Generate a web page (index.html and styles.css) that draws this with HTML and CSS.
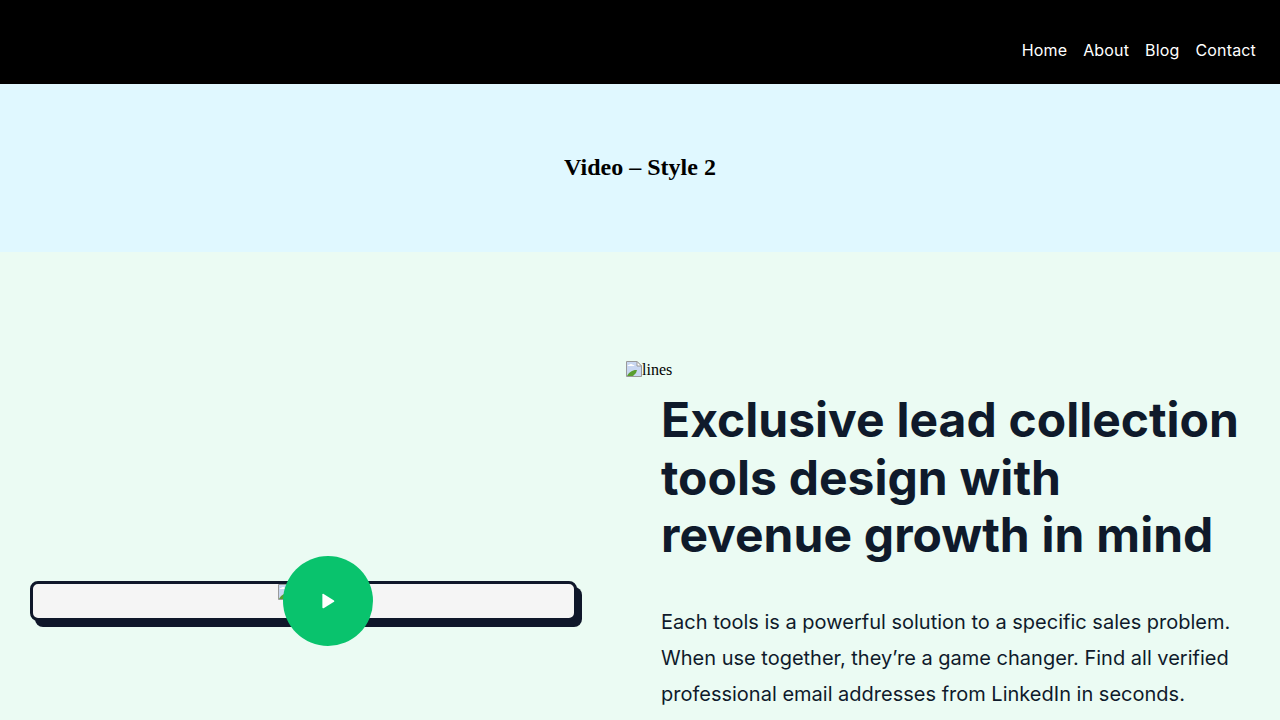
FILE: index.html
```html
<!DOCTYPE html>
<html lang="en">
<head>
    <meta charset="UTF-8">
    <meta name="viewport" content="width=device-width, initial-scale=1.0">
    <title>Video - Style 2</title>
    <link rel="stylesheet" href="styles.css">
</head>
<body>
    <header class="site-header">
        <nav class="main-nav">
            <a href="#">Home</a>
            <a href="#">About</a>
            <a href="#">Blog</a>
            <a href="#">Contact</a>
        </nav>
    </header>

    <section class="page-title">
        <h2>Video – Style 2</h2>
    </section>

    <section class="video-section">
        <div class="video-col">
            <div class="video-frame">
                <div class="frame-alt">
                    <svg class="broken-img" viewBox="0 0 16 16" aria-hidden="true">
                        <path d="M.5.5h10.500l4.500 4.500v10.500h-15z" fill="#c9d7f2" stroke="#9a9a9a"/>
                        <path d="M3 4c1-1.500 3-1.500 4 0 1 0 1.500.5 1.500 1h-7c0-.5.700-1 1.500-1z" fill="#fff"/>
                        <path d="M11 .5v4.500h4.500z" fill="#fff" stroke="#9a9a9a"/>
                        <path d="M1 15c2-4 6-6.500 10-6l-1 3-3 3z" fill="#5a9e2f"/>
                    </svg>video
                </div>
                <button class="play-btn" type="button" aria-label="Play video">
                    <svg viewBox="0 0 16 16" width="20" height="20">
                        <path d="M3.500 2.800v10.400c0 .5.500.8 1 .5l8.300-5.200c.4-.3.400-.7 0-1L4.500 2.300c-.5-.3-1 0-1 .5z" fill="#fff"/>
                    </svg>
                </button>
            </div>
        </div>
        <div class="text-col">
            <div class="lines-img">
                <svg class="broken-img" viewBox="0 0 16 16" aria-hidden="true">
                    <path d="M.5.5h10.500l4.500 4.500v10.500h-15z" fill="#c9d7f2" stroke="#9a9a9a"/>
                    <path d="M3 4c1-1.500 3-1.500 4 0 1 0 1.500.5 1.500 1h-7c0-.5.700-1 1.500-1z" fill="#fff"/>
                    <path d="M11 .5v4.500h4.500z" fill="#fff" stroke="#9a9a9a"/>
                    <path d="M1 15c2-4 6-6.500 10-6l-1 3-3 3z" fill="#5a9e2f"/>
                </svg>lines
            </div>
            <div class="text-body">
                <h1>Exclusive lead collection tools design with revenue growth in mind</h1>
                <p>Each tools is a powerful solution to a specific sales problem. When use together, they’re a game changer. Find all verified professional email addresses from LinkedIn in seconds.</p>
            </div>
        </div>
    </section>
</body>
</html>
```

FILE: styles.css
```css
body {
    margin: 0;
    font-family: "Liberation Serif", serif;
    color: #000;
    background: #ebfbf3;
}
.site-header {
    display: flex;
    justify-content: flex-end;
    align-items: flex-end;
    height: 84px;
    box-sizing: border-box;
    padding: 0 24px 22px;
    background: #000;
}
.main-nav {
    display: flex;
    gap: 16px;
}
.main-nav a {
    font-family: Inter, sans-serif;
    font-size: 16px;
    line-height: 24px;
    letter-spacing: 0.16px;
    color: #fff;
    text-decoration: none;
}
.page-title {
    display: flex;
    align-items: center;
    justify-content: center;
    height: 166px;
    padding-bottom: 2px;
    background: #e0f8ff;
}
.page-title h2 {
    margin: 0;
    font-size: 24px;
    font-weight: bold;
}
.video-section {
    display: grid;
    grid-template-columns: 626px 1fr;
    align-items: center;
    padding: 109px 0 60px;
}
.video-col {
    padding: 0 48px 0 30px;
}
.video-frame {
    position: relative;
    display: flex;
    justify-content: center;
    width: 547px;
    height: 40px;
    box-sizing: border-box;
    border: 3px solid #0f172a;
    border-radius: 8px;
    background: #f5f5f5;
    box-shadow: 5px 6px 0 #0f172a;
}
.frame-alt {
    font-size: 16px;
    line-height: 18px;
}
.broken-img {
    width: 16px;
    height: 16px;
    vertical-align: -2px;
}
.play-btn {
    position: absolute;
    left: 250px;
    top: -28px;
    display: flex;
    align-items: center;
    justify-content: center;
    width: 90px;
    height: 90px;
    padding: 0;
    border: 0;
    border-radius: 50%;
    background: #09c36d;
}
.text-col {
    min-height: 480px;
}
.lines-img {
    font-size: 16px;
    line-height: 18px;
}
.text-body {
    padding: 0 35px;
}
.text-body h1 {
    margin: 12px 0 40px;
    font-family: Inter, sans-serif;
    font-size: 48px;
    font-weight: 700;
    line-height: 57.6px;
    word-spacing: 0.5px;
    color: #0f1a2b;
}
.text-body p {
    margin: 0;
    font-family: Inter, sans-serif;
    font-size: 20px;
    line-height: 36px;
    color: #0f1a2b;
}
```
